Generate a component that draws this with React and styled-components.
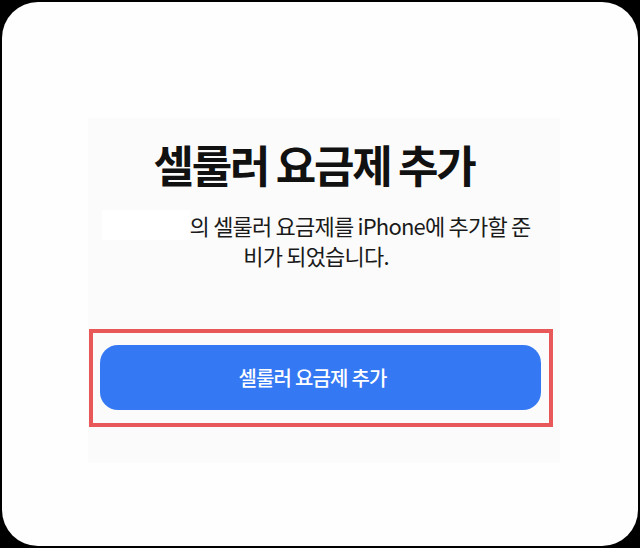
import styled, { createGlobalStyle } from "styled-components";

const GlobalStyle = createGlobalStyle`
  html, body {
    margin: 0;
    padding: 0;
    background: #000;
  }
  body {
    font-family: "Noto Sans CJK KR", "Noto Sans", sans-serif;
  }
`;

const Screen = styled.div`
  width: 640px;
  height: 548px;
  padding: 2px;
  box-sizing: border-box;
  background: #000;
`;

const Card = styled.div`
  height: 100%;
  border-radius: 36px;
  background: #fefefe;
  display: flex;
  justify-content: center;
  align-items: flex-start;
  padding: 116px 0 0 0;
  box-sizing: border-box;
`;

const Sheet = styled.div`
  width: 472px;
  height: 345px;
  margin-left: 8px;
  background: #fbfbfb;
  display: flex;
  flex-direction: column;
  align-items: center;
`;

const Copy = styled.div`
  align-self: stretch;
  padding-right: 20px;
  display: flex;
  flex-direction: column;
  align-items: center;
`;

const Title = styled.h1`
  margin: 20px 0 0;
  font-size: 44px;
  line-height: 52px;
  font-weight: 700;
  letter-spacing: -2.3px;
  color: #111;
`;

const Message = styled.p`
  margin: 20px 0 0;
  padding-left: 4px;
  font-size: 22px;
  line-height: 30px;
  font-weight: 400;
  letter-spacing: -0.8px;
  color: #1a1a1a;
  text-align: center;
`;

const Redacted = styled.span`
  display: inline-block;
  width: 88px;
  height: 30px;
  vertical-align: top;
  background: #fff;
`;

const Highlight = styled.div`
  margin: 59px 6px 0 0;
  width: 464px;
  box-sizing: border-box;
  border: 4px solid #e85858;
  padding: 12px 8px 13px 7px;
`;

const Button = styled.button`
  display: block;
  width: 100%;
  height: 65px;
  padding: 0 16px 0 0;
  border: none;
  border-radius: 18px;
  background: #3478f3;
  color: #fff;
  font-family: inherit;
  font-size: 20px;
  font-weight: 500;
  letter-spacing: -0.8px;
  cursor: pointer;
`;

const App = () => {
  return (
    <Screen>
      <GlobalStyle />
      <Card>
        <Sheet>
          <Copy>
            <Title>셀룰러 요금제 추가</Title>
            <Message>
              <Redacted />
              의 셀룰러 요금제를 iPhone에 추가할 준
              <br />
              비가 되었습니다.
            </Message>
          </Copy>
          <Highlight>
            <Button>셀룰러 요금제 추가</Button>
          </Highlight>
        </Sheet>
      </Card>
    </Screen>
  );
};

export default App;
